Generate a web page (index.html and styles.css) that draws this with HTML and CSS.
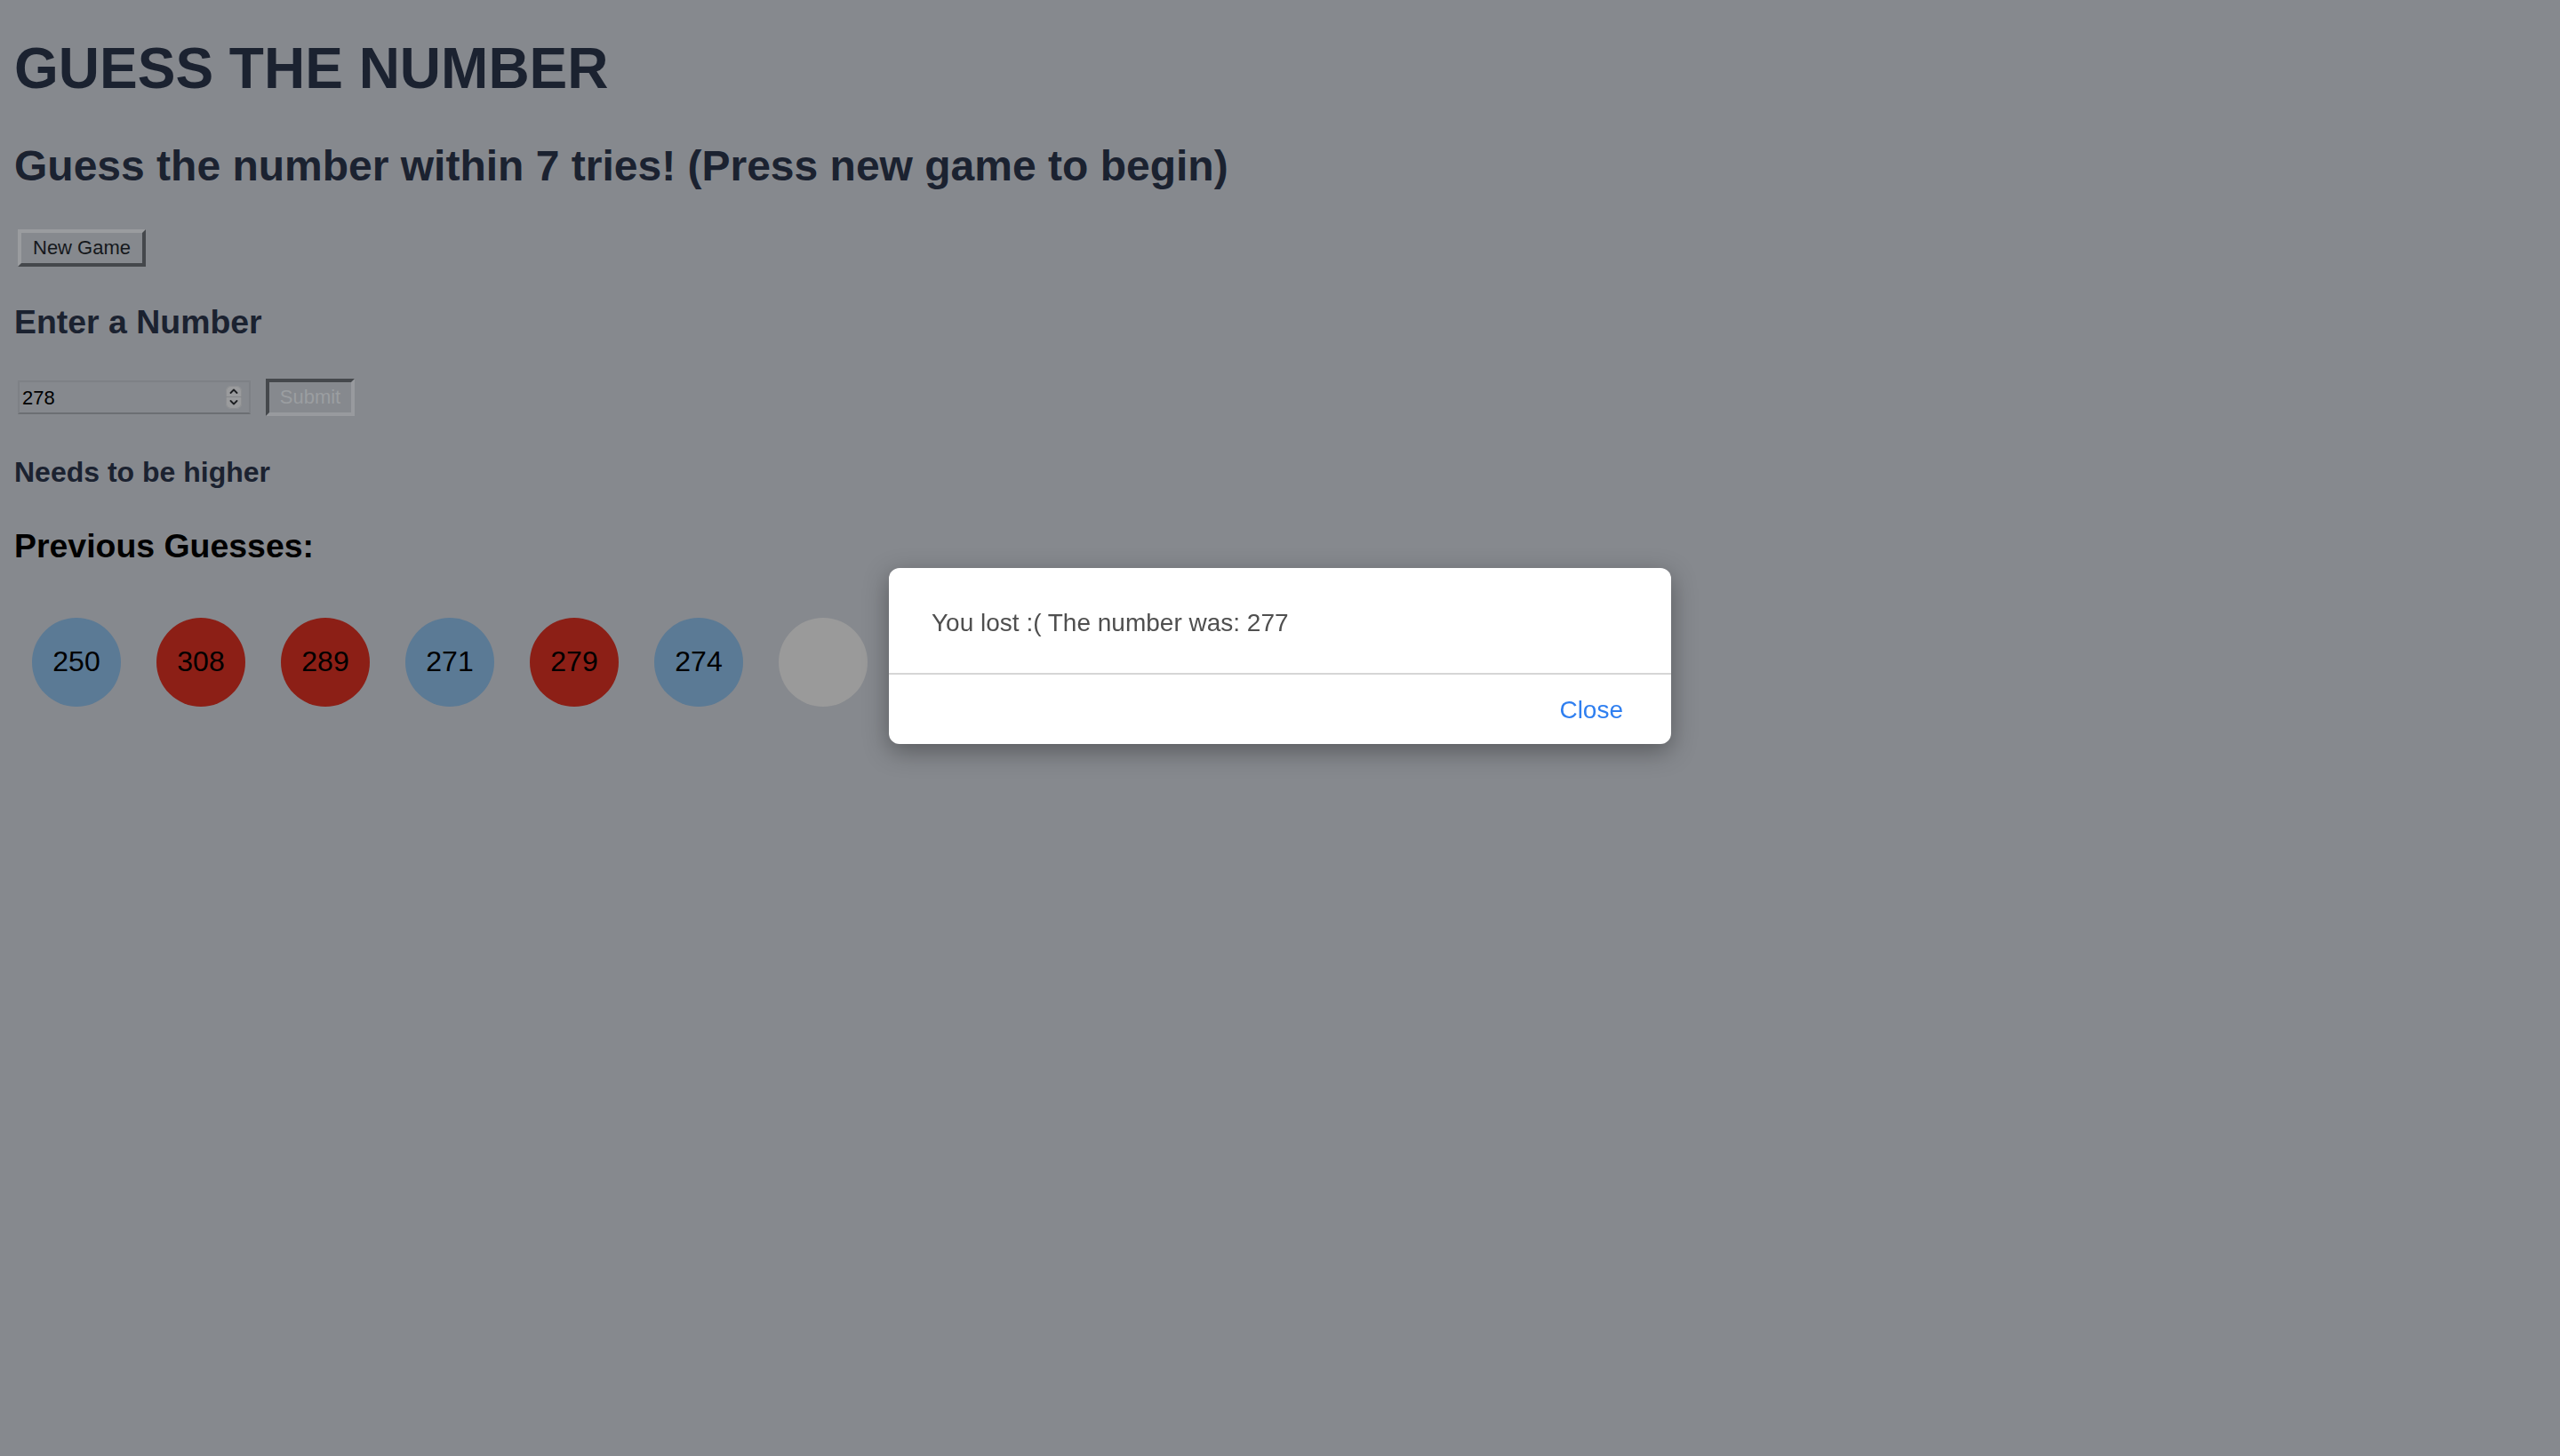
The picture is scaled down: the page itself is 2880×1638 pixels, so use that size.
FILE: index.html
```html
<!DOCTYPE html>
<html lang="en">
<head>
<meta charset="utf-8">
<title>Guess the Number</title>
<link rel="stylesheet" href="styles.css">
</head>
<body>
<div class="page">
  <h1 class="title">GUESS THE NUMBER</h1>
  <h2 class="subtitle">Guess the number within 7 tries! (Press new game to begin)</h2>
  <button class="btn btn-new" type="button">New Game</button>
  <h3 class="label">Enter a Number</h3>
  <div class="guess-row">
    <div class="number-field">
      <input class="number-input" type="number" value="278">
      <span class="spinner">
        <svg class="chev" viewBox="0 0 10 6" width="10" height="6"><path d="M1.5 5 L5 1.5 L8.5 5" fill="none" stroke="#1d1f22" stroke-width="1.8" stroke-linecap="round" stroke-linejoin="round"/></svg>
        <span class="spinner-sep"></span>
        <svg class="chev" viewBox="0 0 10 6" width="10" height="6"><path d="M1.5 1 L5 4.5 L8.5 1" fill="none" stroke="#1d1f22" stroke-width="1.8" stroke-linecap="round" stroke-linejoin="round"/></svg>
      </span>
    </div>
    <button class="btn btn-submit" type="button" disabled>Submit</button>
  </div>
  <h4 class="hint">Needs to be higher</h4>
  <h3 class="prev-title">Previous Guesses:</h3>
  <div class="guesses">
    <div class="guess low">250</div>
    <div class="guess high">308</div>
    <div class="guess high">289</div>
    <div class="guess low">271</div>
    <div class="guess high">279</div>
    <div class="guess low">274</div>
    <div class="guess empty"></div>
  </div>
</div>

<div class="modal-layer">
  <div class="modal">
    <div class="modal-body">You lost :( The number was: 277</div>
    <div class="modal-footer">
      <button class="modal-close" type="button">Close</button>
    </div>
  </div>
</div>
</body>
</html>
```

FILE: styles.css
```css
html, body {
  margin: 0;
  padding: 0;
  background: #86898e;
  width: 100%;
  height: 100%;
}

body {
  font-family: "Liberation Sans", Arial, Helvetica, sans-serif;
  color: #1b2230;
}

.page {
  display: flex;
  flex-direction: column;
  align-items: flex-start;
  padding: 41px 16px 0 16px;
}

.title,
.subtitle,
.label,
.hint,
.prev-title {
  margin: 0;
  font-weight: bold;
  line-height: 1.15;
}

.title {
  font-size: 64px;
  color: #1b2230;
}

.subtitle {
  margin-top: 44px;
  font-size: 48px;
  color: #1b2230;
}

.btn {
  box-sizing: border-box;
  height: 42px;
  font-family: "Liberation Sans", Arial, Helvetica, sans-serif;
  font-size: 22px;
  line-height: 1.15;
  background: transparent;
  border-width: 4px;
  border-style: solid;
  margin: 0;
  display: flex;
  align-items: center;
  justify-content: center;
}

.btn-new {
  margin-top: 44px;
  margin-left: 4px;
  padding: 0 13px;
  color: #15181c;
  border-top-color: #9a9c9f;
  border-left-color: #9a9c9f;
  border-right-color: #45484c;
  border-bottom-color: #45484c;
}

.label {
  margin-top: 41px;
  font-size: 37.44px;
  color: #1b2230;
}

.guess-row {
  margin-top: 42px;
  display: flex;
  align-items: center;
}

.number-field {
  box-sizing: border-box;
  margin-left: 4px;
  width: 262px;
  height: 38px;
  display: flex;
  align-items: center;
  border: 2px solid #7e8186;
  border-bottom-color: #6c6f73;
  padding: 0 8px 0 3px;
}

.number-input {
  flex: 1;
  min-width: 0;
  border: 0;
  outline: none;
  background: transparent;
  font-family: "Liberation Sans", Arial, Helvetica, sans-serif;
  font-size: 22px;
  color: #000;
  padding: 3px 0 0 0;
  margin: 0;
  -moz-appearance: textfield;
}

.number-input::-webkit-inner-spin-button,
.number-input::-webkit-outer-spin-button {
  -webkit-appearance: none;
  margin: 0;
}

.spinner {
  box-sizing: border-box;
  width: 18px;
  height: 26px;
  border-radius: 6px;
  background: #9a9b9d;
  box-shadow: inset 0 0 0 1px #8c8e91;
  display: flex;
  flex-direction: column;
  align-items: center;
  justify-content: space-between;
  padding: 3px 0 4px 0;
}

.spinner-sep {
  width: 100%;
  height: 1px;
  background: #85878a;
}

.chev {
  display: block;
}

.btn-submit {
  margin-left: 17px;
  width: 100px;
  padding: 0 12px;
  color: #9b9ea1;
  border-top-color: #45484c;
  border-left-color: #45484c;
  border-right-color: #989a9e;
  border-bottom-color: #989a9e;
}

.hint {
  margin-top: 45.5px;
  font-size: 32px;
  color: #1b2230;
}

.prev-title {
  margin-top: 43.2px;
  font-size: 37.44px;
  color: #000;
}

.guesses {
  margin-top: 58.5px;
  display: flex;
}

.guess {
  width: 100px;
  height: 100px;
  margin: 0 20px;
  border-radius: 50%;
  display: flex;
  align-items: center;
  justify-content: center;
  font-size: 32px;
  color: #000;
}

.guess.low {
  background: #5b7a95;
}

.guess.high {
  background: #8c1f16;
}

.guess.empty {
  background: #9a9a9a;
}

/* Modal */
.modal-layer {
  position: fixed;
  top: 0;
  left: 0;
  right: 0;
  bottom: 0;
  display: flex;
  justify-content: center;
  align-items: flex-start;
  padding-top: 639px;
}

.modal {
  width: 880px;
  background: #fff;
  border-radius: 12px;
  box-shadow: 0 8px 28px rgba(0, 0, 0, 0.35);
  overflow: hidden;
}

.modal-body {
  height: 120px;
  box-sizing: border-box;
  padding: 6px 48px 0 48px;
  display: flex;
  align-items: center;
  font-size: 28px;
  line-height: 1.15;
  color: #4f4f4f;
  border-bottom: 2px solid #d6d6d6;
}

.modal-footer {
  height: 78px;
  box-sizing: border-box;
  display: flex;
  align-items: center;
  justify-content: flex-end;
  padding: 3px 54px 0 54px;
}

.modal-close {
  background: transparent;
  border: 0;
  padding: 0;
  margin: 0;
  font-family: "Liberation Sans", Arial, Helvetica, sans-serif;
  font-size: 28px;
  line-height: 1.15;
  color: #2f7ff0;
}
```
